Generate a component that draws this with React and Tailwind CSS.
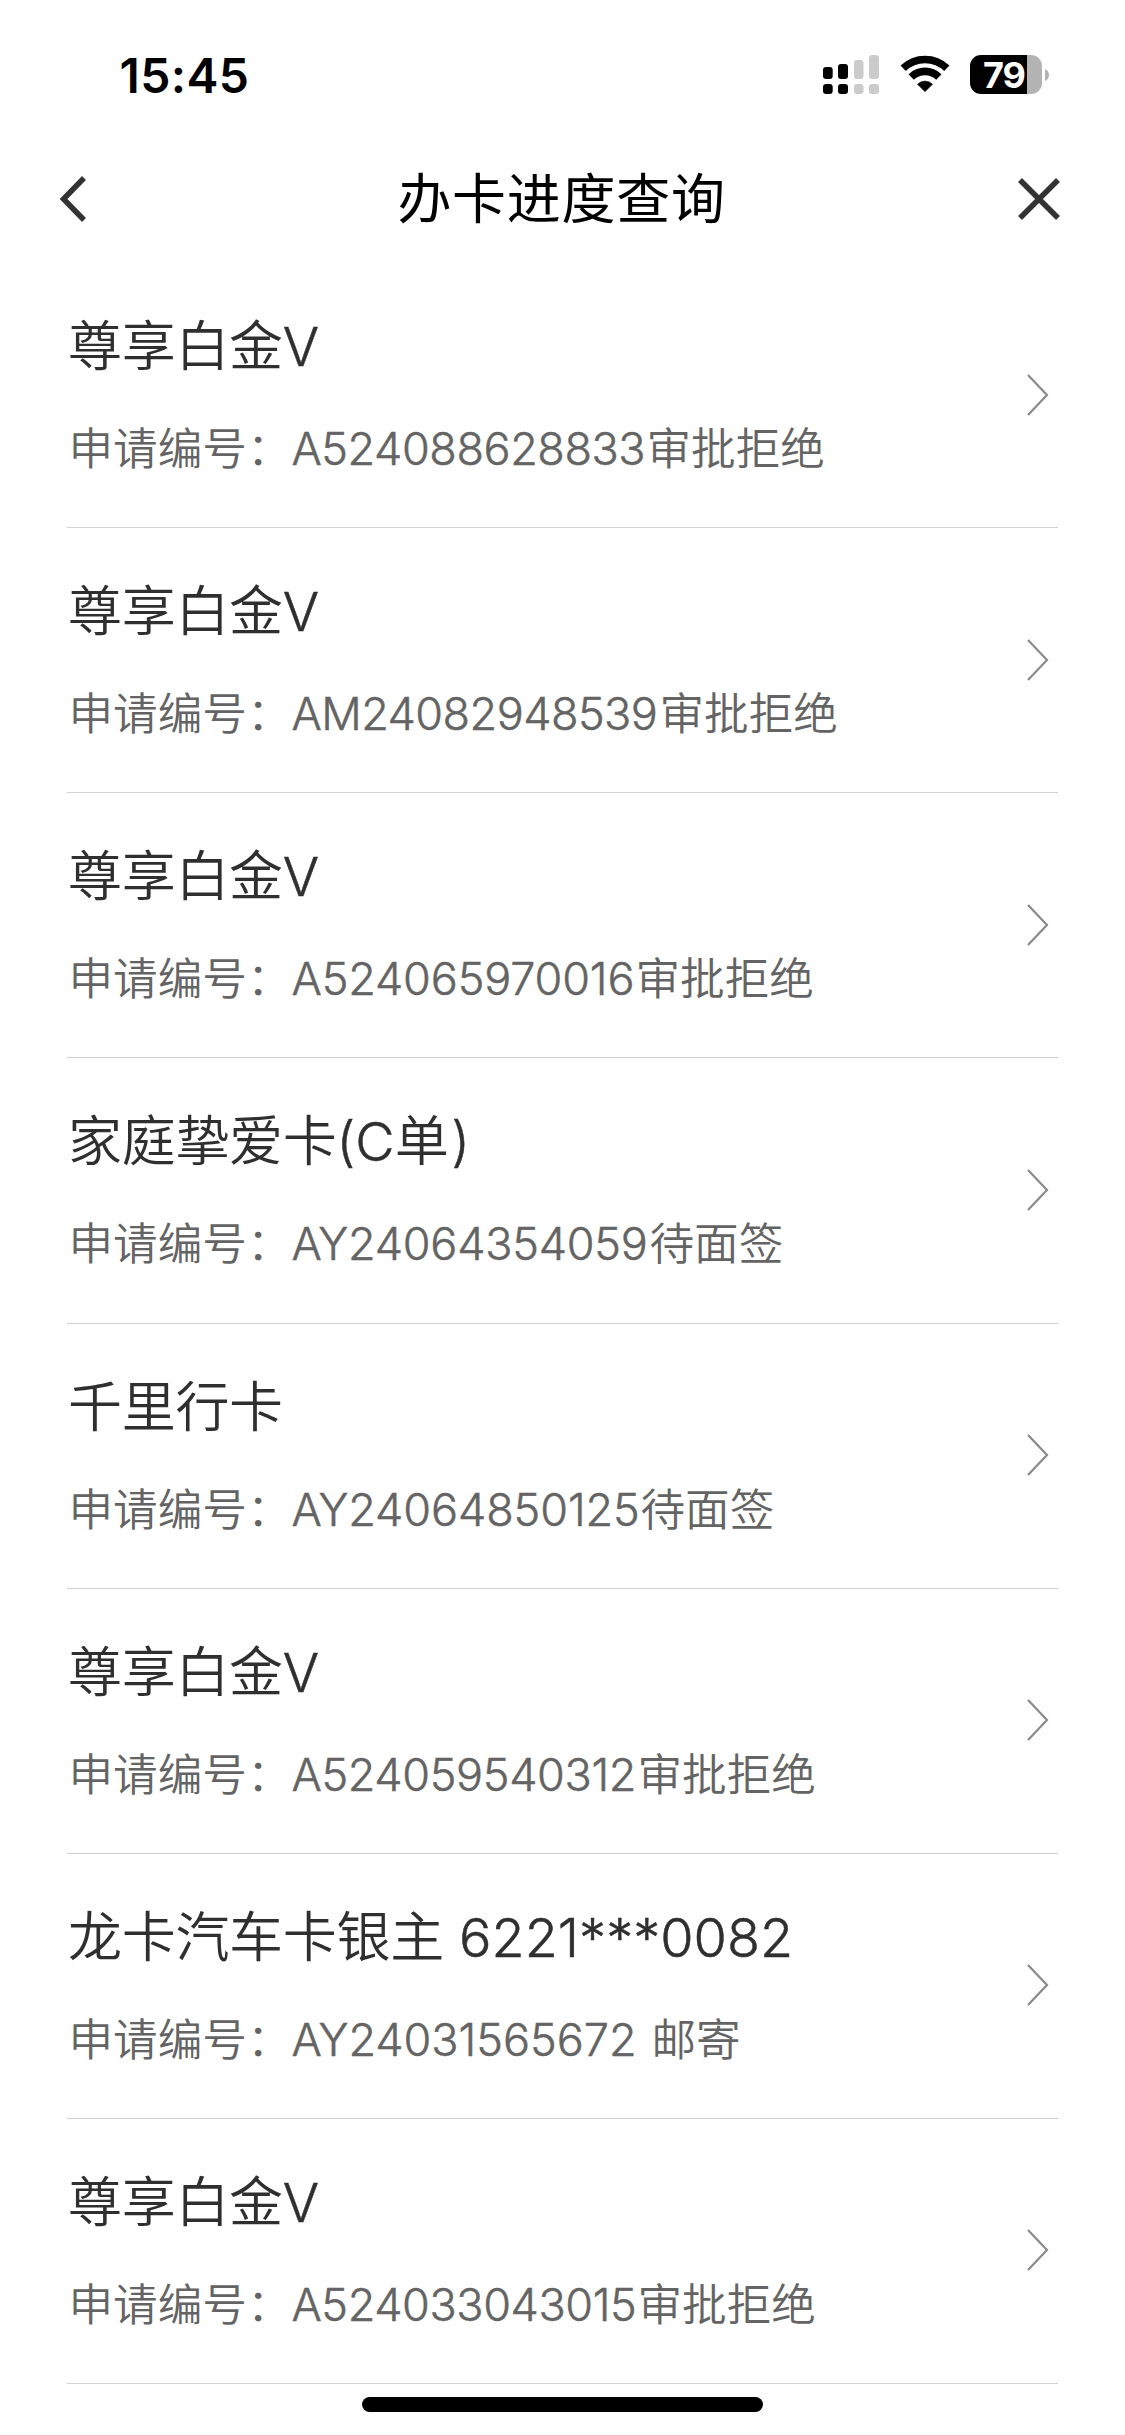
import React from "react";

const records = [
  { title: "尊享白金", suffix: "V", id: "A524088628833", status: "审批拒绝", idClass: "w-[355px] tracking-[-0.43px]" },
  { title: "尊享白金", suffix: "V", id: "AM24082948539", status: "审批拒绝", idClass: "w-[368px] tracking-[-0.54px]" },
  { title: "尊享白金", suffix: "V", id: "A524065970016", status: "审批拒绝", idClass: "w-[344px] tracking-[-0.15px]" },
  { title: "家庭挚爱卡", suffix: "(C", tail: "单", close: ")", id: "AY24064354059", status: "待面签", idClass: "w-[358px] tracking-[-0.23px]" },
  { title: "千里行卡", id: "AY24064850125", status: "待面签", idClass: "w-[349px] tracking-[-0.09px]" },
  { title: "尊享白金", suffix: "V", id: "A524059540312", status: "审批拒绝", idClass: "w-[346px] tracking-[-0.35px]" },
  { title: "龙卡汽车卡银主", suffix: " 6221***0082", id: "AY24031565672", status: "邮寄", idClass: "w-[360px] tracking-[-0.02px]" },
  { title: "尊享白金", suffix: "V", id: "A524033043015", status: "审批拒绝", idClass: "w-[346px] tracking-[-0.41px]" },
];

function SignalIcon() {
  return (
    <svg width="57" height="40" viewBox="0 0 57 40" className="block">
      <g fill="#000">
        <rect x="0" y="12" width="9.7" height="12" rx="3" />
        <rect x="15" y="9" width="10" height="15" rx="3" />
        <rect x="0" y="29" width="9.7" height="10" rx="3" />
        <rect x="15" y="29" width="10" height="10" rx="3" />
      </g>
      <g fill="#cbcbcb">
        <rect x="31" y="5" width="9.5" height="19" rx="3" />
        <rect x="46" y="0" width="10" height="24" rx="3" />
        <rect x="31" y="29" width="9.5" height="10" rx="3" />
        <rect x="46" y="29" width="10" height="10" rx="3" />
      </g>
    </svg>
  );
}

function WifiIcon() {
  return (
    <svg width="50" height="38" viewBox="0 0 50 38" className="block">
      <g fill="none" stroke="#000" strokeWidth="7.6">
        <path d="M3.2 13.2 A31.5 31.5 0 0 1 46.8 13.2" />
        <path d="M11.2 22 A19.8 19.8 0 0 1 38.8 22" />
      </g>
      <path d="M25 36.6 L17.6 29.2 A10.5 10.5 0 0 1 32.4 29.2 Z" fill="#000" stroke="#000" strokeWidth="0.8" strokeLinejoin="round" />
    </svg>
  );
}

function Battery() {
  return (
    <div className="flex items-center gap-[3px]">
      <div className="flex h-[39px] w-[72px] items-center rounded-[11px] bg-[linear-gradient(to_right,#000_57px,#b3b3b3_57px)] pl-[13px]">
        <span className="pt-px text-[36px] leading-[39px] font-bold tracking-[-1px] text-white">79</span>
      </div>
      <svg width="4" height="12" viewBox="0 0 4 12">
        <path d="M0 0 Q4 2 4 6 Q4 10 0 12 Z" fill="#b3b3b3" />
      </svg>
    </div>
  );
}

function StatusBar() {
  return (
    <div className="flex h-[150px] items-start justify-between pt-[55px] pr-[76px] pl-[119.5px]">
      <span className="-mt-[3px] text-[48px] leading-[48px] font-semibold tracking-[0.4px]">15:45</span>
      <div className="flex">
        <SignalIcon />
        <div className="ml-[20px]"><WifiIcon /></div>
        <div className="ml-[20px]"><Battery /></div>
      </div>
    </div>
  );
}

function NavBar() {
  return (
    <header className="flex h-[98px] items-center justify-between pr-[65px] pl-[58px]">
      <svg width="28" height="46" viewBox="0 0 28 46" className="mr-[19px]" fill="none" stroke="#333" strokeWidth="5.5">
        <path d="M26 2 L5.5 23 L26 44" />
      </svg>
      <h1 className="pt-px text-[54px] leading-[60px] tracking-[0.7px] text-black">办卡进度查询</h1>
      <svg width="42" height="42" viewBox="0 0 42 42" fill="none" stroke="#333" strokeWidth="5.5">
        <path d="M2 2 L40 40 M40 2 L2 40" />
      </svg>
    </header>
  );
}

function Record({ title, suffix, tail, close, id, status, idClass }) {
  return (
    <li className="flex h-[265.14px] items-center justify-between border-b border-[#d0d0d0]">
      <div className="pt-[6px] pl-[1.5px] whitespace-pre">
        <h2 className="-ml-[0.5px] text-[54px] leading-[60px] font-[350] tracking-[-0.3px] text-[#2f2f2f]">
          {title}
          {suffix && <span className="tracking-[0px] [-webkit-text-stroke:0.5px]">{suffix}</span>}
          {tail}
          {close && <span className="ml-[3px] [-webkit-text-stroke:0.5px]">{close}</span>}
        </h2>
        <p className="mt-[42px] flex text-[44.6px] leading-[60px] font-[350] text-[#646464]">
          <span>申请编号：</span>
          <span className={`${idClass} text-[45px] [-webkit-text-stroke:0.5px]`}>{id}</span>
          <span>{status}</span>
        </p>
      </div>
      <svg width="22" height="42" viewBox="0 0 22 42" className="mr-[9px] mb-px" fill="none" stroke="#8a8a8a" strokeWidth="2.2">
        <path d="M1 1 L20 21 L1 41" />
      </svg>
    </li>
  );
}

export default function App() {
  return (
    <div className="flex h-[2435px] w-[1125px] flex-col overflow-hidden bg-white font-['Inter','Noto_Sans_CJK_SC',sans-serif] text-black">
      <StatusBar />
      <NavBar />
      <ul className="mt-[15px] mr-[67px] ml-[67px]">
        {records.map((record) => (
          <Record key={record.id} {...record} />
        ))}
      </ul>
      <div className="mt-[13px] h-[15px] w-[401px] shrink-0 self-center rounded-full bg-black" />
    </div>
  );
}
